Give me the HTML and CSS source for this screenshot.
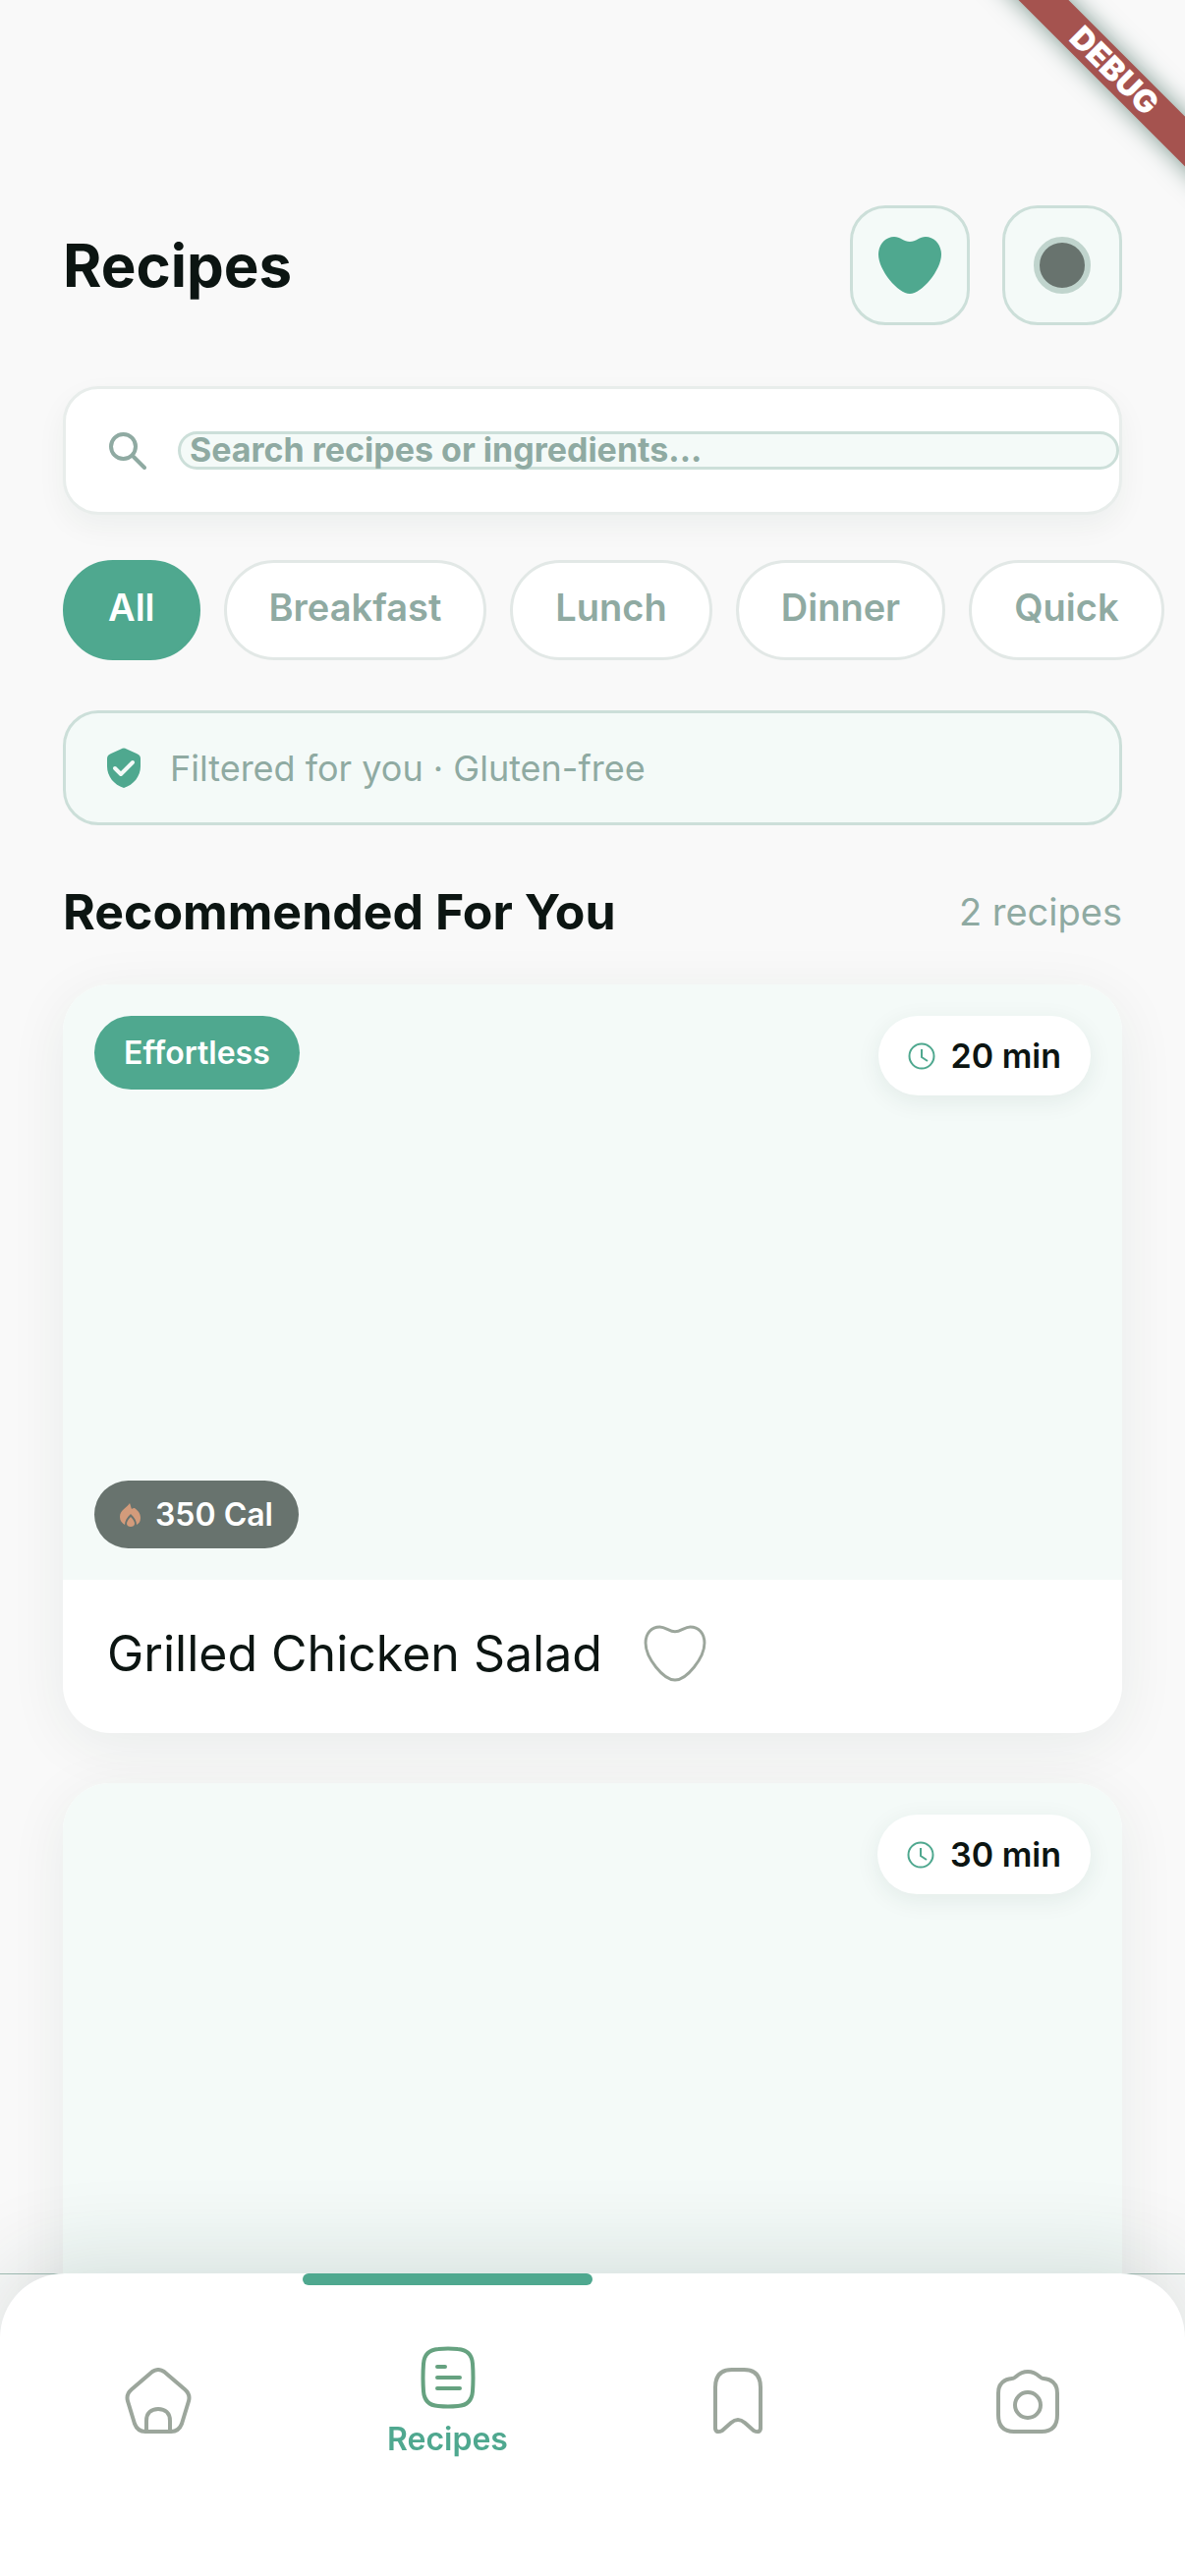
FILE: index.html
```html
<!DOCTYPE html>
<html lang="en">
<head>
  <meta charset="UTF-8">
  <meta name="viewport" content="width=device-width, initial-scale=1.0">
  <title>Recipes</title>
  <link rel="stylesheet" href="styles.css">
</head>
<body>
  <div class="ribbon">DEBUG</div>

  <main class="page">
    <header class="header">
      <h1>Recipes</h1>
      <div class="header-actions">
        <button class="icon-button" aria-label="Favourites">
          <svg width="66" height="60" viewBox="0 0 66 60">
            <path fill="#4fa88f" d="M17 1 C23 1 27 6 33 6 C39 6 43 1 49 1 C58 1 65 9 65 19 C65 35 45 59 33 59 C21 59 1 35 1 19 C1 9 8 1 17 1 Z"/>
          </svg>
        </button>
        <button class="icon-button" aria-label="Profile">
          <span class="avatar"></span>
        </button>
      </div>
    </header>

    <div class="search">
      <svg width="40" height="38" viewBox="0 0 40 38" fill="none" stroke="#8faaa2" stroke-width="4" stroke-linecap="round">
        <circle cx="16.500" cy="14.500" r="12.500"/>
        <path d="M27 25 L38 36"/>
      </svg>
      <div class="search-field">
        <input type="text" placeholder="Search recipes or ingredients..." aria-label="Search recipes or ingredients">
      </div>
    </div>

    <div class="chips">
      <button class="chip active">All</button>
      <button class="chip">Breakfast</button>
      <button class="chip">Lunch</button>
      <button class="chip">Dinner</button>
      <button class="chip">Quick</button>
    </div>

    <div class="notice">
      <svg width="34" height="41" viewBox="0 0 34 41">
        <path fill="#4fa88f" d="M14 1.500 Q17 -0.500 20 1.500 L30 6 Q34 7.500 34 11 V19 C34 29 27 38 17 41 C7 38 0 29 0 19 V11 Q0 7.500 4 6 Z"/>
        <path fill="none" stroke="#f4faf8" stroke-width="4" stroke-linecap="round" stroke-linejoin="round" d="M8 21 L14 27 L26 15"/>
      </svg>
      <span>Filtered for you · Gluten-free</span>
    </div>

    <div class="section-title">
      <h2>Recommended For You</h2>
      <span>2 recipes</span>
    </div>

    <article class="card">
      <div class="card-image">
        <span class="badge badge-level">Effortless</span>
        <span class="badge badge-time">
          <svg width="28" height="28" viewBox="0 0 28 28" fill="none" stroke="#4fa88f" stroke-width="2">
            <circle cx="14" cy="14" r="12.500"/>
            <path d="M14 7 V15 L20 19"/>
          </svg>
          20 min
        </span>
        <span class="badge badge-cal">
          <svg width="22" height="24" viewBox="0 0 22 24">
            <path fill="#d39b7b" fill-rule="evenodd" d="M10 0 C11 2 11 4 12 6 C13 5 14 5 15 5 C17 7 21 9 21 15 C21 19 19 21 17 22 C17 18 15 15 11 11 C7 15 5 18 5 22 C2 20 0 18 0 14 C0 7 7 5 10 0 Z M11 14 C8 17 7 19 7 21 C7 23 9 24 11 24 C13 24 15 23 15 21 C15 19 14 17 11 14 Z"/>
          </svg>
          350 Cal
        </span>
      </div>
      <div class="card-body">
        <h3>Grilled Chicken Salad</h3>
        <button class="like" aria-label="Like">
          <svg width="64" height="58" viewBox="0 0 66 60">
            <path fill="none" stroke="#9ca69c" stroke-width="3" d="M17 2 C23 2 27 7 33 7 C39 7 43 2 49 2 C58 2 64 9 64 19 C64 35 45 58 33 58 C21 58 2 35 2 19 C2 9 8 2 17 2 Z"/>
          </svg>
        </button>
      </div>
    </article>

    <article class="card">
      <div class="card-image">
        <span class="badge badge-time">
          <svg width="28" height="28" viewBox="0 0 28 28" fill="none" stroke="#4fa88f" stroke-width="2">
            <circle cx="14" cy="14" r="12.500"/>
            <path d="M14 7 V15 L20 19"/>
          </svg>
          30 min
        </span>
      </div>
    </article>
  </main>

  <nav class="bottom-nav">
    <div class="tabs">
      <a href="#" class="tab" aria-label="Home">
        <svg width="68" height="68" viewBox="0 0 68 68">
          <path d="M28 4 Q34 0 40 4 L61 22 Q67 27 65 34 L58 57 Q55 65 47 65 H21 Q13 65 10 57 L3 34 Q1 27 7 22 Z"/>
          <path d="M22 65 V54 C22 46 27 42 34 42 C41 42 46 46 46 54 V65"/>
        </svg>
      </a>
      <a href="#" class="tab active">
        <svg width="68" height="68" viewBox="0 0 68 68">
          <path d="M24 5 Q34 4 44 5 Q58 6 59 20 Q60 34 59 48 Q58 62 44 63 Q34 64 24 63 Q10 62 9 48 Q8 34 9 20 Q10 6 24 5 Z"/>
          <path d="M23 23 H31 M23 34 H46 M23 45 H46"/>
        </svg>
        <span>Recipes</span>
      </a>
      <a href="#" class="tab" aria-label="Saved">
        <svg width="68" height="68" viewBox="0 0 68 68">
          <path d="M11 62 V20 Q11 2 28 2 H40 Q57 2 57 20 V62 Q56 67 50 64 L41 56 Q34 50 27 56 L18 64 Q12 67 11 62 Z"/>
        </svg>
      </a>
      <a href="#" class="tab" aria-label="Camera">
        <svg width="68" height="68" viewBox="0 0 68 68">
          <path d="M18 11 C22 11 24 4 34 4 C44 4 46 11 50 11 C60 12 64 18 64 26 V48 C64 60 58 65 48 65 H20 C10 65 4 60 4 48 V26 C4 18 8 12 18 11 Z"/>
          <circle cx="34" cy="38" r="13"/>
        </svg>
      </a>
    </div>
  </nav>
</body>
</html>
```
FILE: styles.css
```css
* {
  box-sizing: border-box;
}

html,
body {
  height: 100%;
}

body {
  margin: 0;
  overflow: hidden;
  background-color: #f9f9f9;
  color: #0c1512;
  font-family: Inter, "Liberation Sans", sans-serif;
}

h1,
h2,
h3 {
  margin: 0;
}

button,
input {
  font-family: inherit;
}

.page {
  height: 100%;
  overflow: hidden;
  padding: 209px 64px 0;
}

/* corner banner */
.ribbon {
  position: absolute;
  top: 54px;
  right: -88px;
  width: 320px;
  height: 36px;
  line-height: 36px;
  background-color: #a5534f;
  box-shadow: 0 0 24px rgba(40, 85, 72, 0.6);
  color: white;
  font-size: 32px;
  font-weight: 900;
  text-align: center;
  transform: rotate(45deg);
}

.header {
  display: flex;
  justify-content: space-between;
  align-items: center;
}

.header h1 {
  font-size: 60px;
}

.header-actions {
  display: flex;
  gap: 33px;
}

.icon-button {
  display: flex;
  justify-content: center;
  align-items: center;
  width: 122px;
  height: 122px;
  padding: 0;
  background-color: #f4faf8;
  border: 3px solid #ccdfd9;
  border-radius: 36px;
}

.avatar {
  width: 58px;
  height: 58px;
  background-color: #68736e;
  border: 6px solid #c0d4cd;
  border-radius: 50%;
}

.search {
  display: flex;
  align-items: center;
  gap: 32px;
  height: 131px;
  margin-top: 62px;
  padding-left: 42px;
  background-color: white;
  border: 3px solid #e8edeb;
  border-radius: 36px;
  box-shadow: 0 12px 30px rgba(20, 60, 48, 0.05);
}

.search svg {
  flex: none;
}

.search-field {
  flex: 1;
  display: flex;
  align-items: center;
  height: 39px;
  background-color: #f4faf8;
  border: 3px solid #ccdfd9;
  border-radius: 20px;
}

/* taller than its frame so that descenders are not clipped */
.search-field input {
  flex: 1;
  min-width: 0;
  height: 54px;
  padding: 0 9px 2px;
  background: none;
  border: none;
  font-size: 34px;
  font-weight: 700;
}

.search-field input::placeholder {
  color: #8faaa2;
}

.chips {
  display: flex;
  gap: 24px;
  margin-top: 46px;
  margin-right: -64px;
  overflow: hidden;
}

.chip {
  flex: none;
  height: 102px;
  padding: 0 43px 6px;
  background-color: white;
  border: 3px solid #e2e8e6;
  border-radius: 51px;
  color: #8faaa2;
  font-size: 38px;
  font-weight: 600;
}

.chip.active {
  background-color: #4fa88f;
  border-color: #4fa88f;
  color: white;
}

.notice {
  display: flex;
  align-items: center;
  gap: 30px;
  height: 117px;
  margin-top: 51px;
  padding: 0 42px;
  background-color: #f4faf8;
  border: 3px solid #ccdfd9;
  border-radius: 36px;
  color: #8faaa2;
  font-size: 36px;
}

.section-title {
  display: flex;
  justify-content: space-between;
  align-items: center;
  height: 84px;
  margin: 48px 0 30px;
  padding-bottom: 4px;
}

.section-title h2 {
  font-size: 50px;
}

.section-title span {
  color: #8faaa2;
  font-size: 38px;
}

.card {
  margin-bottom: 51px;
  background-color: white;
  border-radius: 48px;
  box-shadow: 0 12px 60px rgba(20, 60, 48, 0.07);
}

.card-image {
  position: relative;
  height: 606px;
  background-color: #f4faf8;
  border-radius: 48px 48px 0 0;
}

.badge {
  position: absolute;
  display: flex;
  align-items: center;
  border-radius: 42px;
  font-size: 32px;
  font-weight: 600;
}

.badge-level {
  top: 32px;
  left: 32px;
  height: 75px;
  padding: 0 30px;
  background-color: #4fa88f;
  color: white;
}

.badge-time {
  top: 32px;
  right: 32px;
  gap: 16px;
  height: 81px;
  padding: 0 30px;
  background-color: white;
  box-shadow: 0 6px 24px rgba(20, 60, 48, 0.08);
  font-size: 34px;
}

.badge-cal {
  bottom: 32px;
  left: 32px;
  gap: 14px;
  height: 69px;
  padding: 0 26px;
  background-color: #68736e;
  color: white;
}

.card-body {
  display: flex;
  align-items: center;
  gap: 42px;
  height: 156px;
  padding: 0 45px 6px;
}

.card-body h3 {
  font-size: 50px;
  font-weight: 400;
}

.like {
  display: flex;
  padding: 0;
  background: none;
  border: none;
}

/* bottom navigation */
.bottom-nav {
  position: fixed;
  left: 0;
  right: 0;
  bottom: 0;
  border-top: 1px solid #a3beb6;
}

.tabs {
  display: flex;
  height: 308px;
  padding: 0 13px;
  background-color: white;
  border-radius: 66px 66px 0 0;
  box-shadow: 0 -12px 90px rgba(20, 60, 48, 0.14);
  margin-top: -1px;
}

.tab {
  flex: 1;
  display: flex;
  flex-direction: column;
  justify-content: center;
  align-items: center;
  height: 260px;
  color: #9ca69c;
  text-decoration: none;
}

.tab svg {
  fill: none;
  stroke: currentColor;
  stroke-width: 4;
  stroke-linecap: round;
  stroke-linejoin: round;
}

.tab.active {
  position: relative;
  color: #66a280;
}

.tab.active::before {
  content: "";
  position: absolute;
  top: 0;
  left: 0;
  right: 0;
  height: 12px;
  background-color: #4fa88f;
  border-radius: 6px;
}

.tab span {
  margin-top: 9px;
  color: #4fa88f;
  font-size: 32px;
  font-weight: 600;
}
```
